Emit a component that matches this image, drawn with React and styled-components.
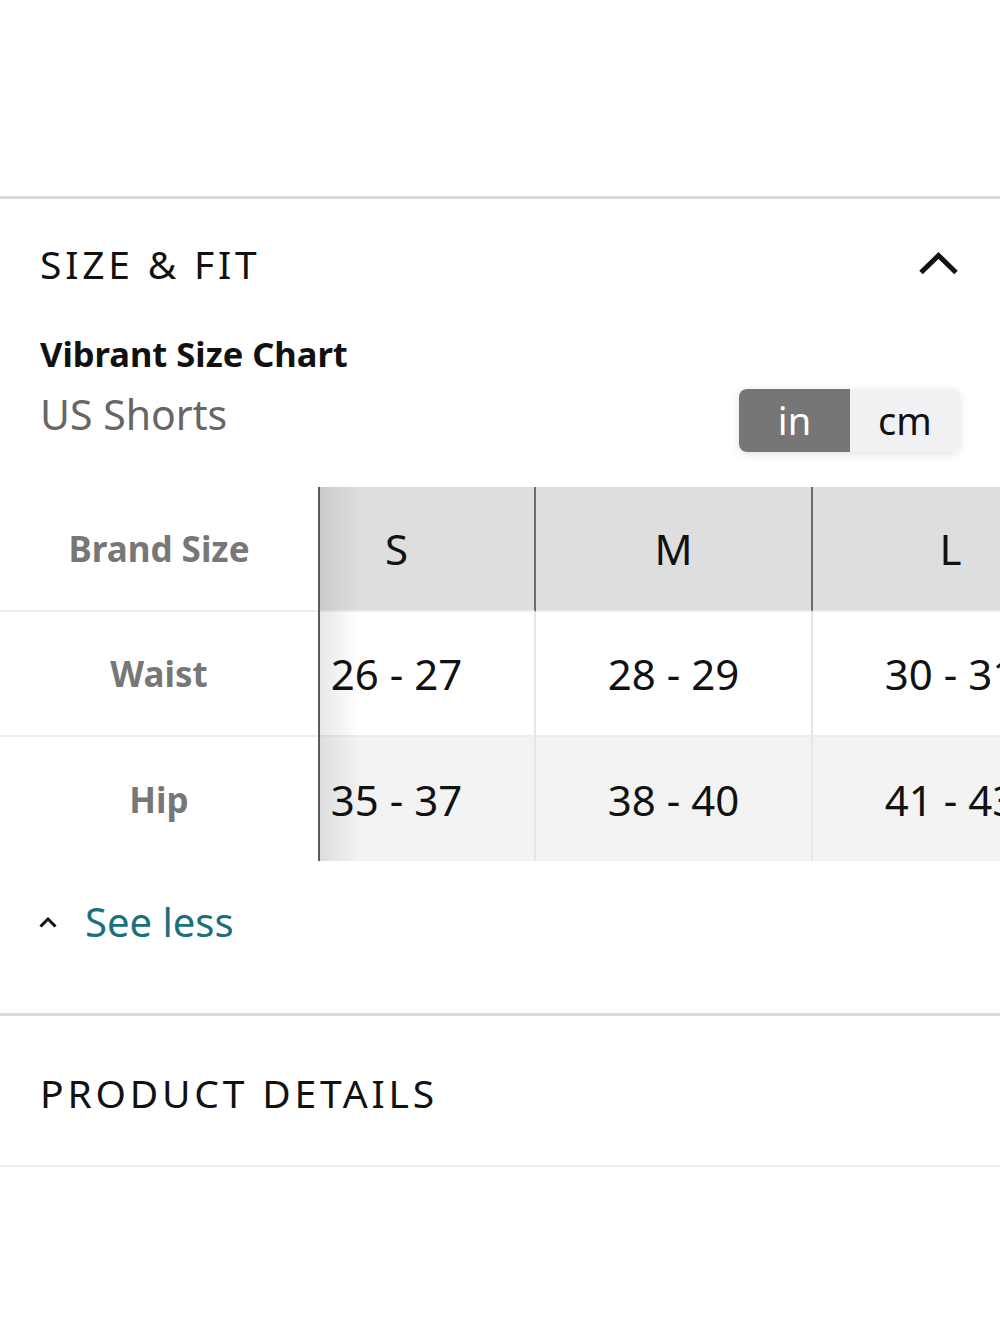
import React from "react";
import styled, { createGlobalStyle } from "styled-components";

const GlobalStyle = createGlobalStyle`
  html, body { margin: 0; padding: 0; background: #fff; }
  body {
    font-family: "Noto Sans", "Open Sans", "Liberation Sans", sans-serif;
    color: #111;
    overflow-x: hidden;
  }
  * { box-sizing: border-box; }
`;

const Page = styled.div`
  width: 1000px;
  padding-top: 196px;
  overflow: hidden;
`;

const Section = styled.section`
  border-top: 3px solid #dadada;
  padding-top: ${(p) => p.$top}px;
  padding-bottom: ${(p) => p.$bottom}px;
  border-bottom: ${(p) => (p.$bottomLine ? "2px solid #efefef" : "none")};
`;

const SectionHeader = styled.div`
  display: flex;
  align-items: center;
  justify-content: space-between;
  height: 47px;
  padding: 0 40px;
`;

const SectionTitle = styled.h2`
  margin: 0;
  font-size: 39px;
  line-height: 47px;
  font-weight: 400;
  letter-spacing: 3.8px;
  color: #111;
`;

const ChartTitle = styled.div`
  margin-top: 46px;
  padding: 0 40px;
  font-size: 34.5px;
  line-height: 42px;
  font-weight: 700;
  color: #111;
`;

const SubRow = styled.div`
  margin-top: 14px;
  padding: 0 40px;
  display: flex;
  justify-content: space-between;
  align-items: flex-start;
`;

const SubTitle = styled.div`
  font-size: 41px;
  line-height: 50px;
  color: #666;
`;

const Toggle = styled.div`
  display: flex;
  height: 63px;
  border-radius: 8px;
  overflow: hidden;
  box-shadow: 0 2px 8px rgba(0, 0, 0, 0.12);
`;

const ToggleOption = styled.div`
  flex: 0 0 ${(p) => p.$w}px;
  display: flex;
  align-items: center;
  justify-content: center;
  font-size: 38px;
  line-height: 63px;
  background: ${(p) => (p.$active ? "#767676" : "#f1f1f3")};
  color: ${(p) => (p.$active ? "#fff" : "#111")};
`;

const Table = styled.div`
  display: flex;
  margin-top: 35px;
`;

const LabelCol = styled.div`
  flex: 0 0 320px;
  border-right: 2px solid #5a5a5a;
  display: flex;
  flex-direction: column;
  position: relative;
  z-index: 2;
  background: #fff;
`;

const LabelCell = styled.div`
  height: ${(p) => (p.$last ? 124 : 125)}px;
  border-bottom: ${(p) => (p.$last ? "none" : "2px solid #ececec")};
  display: flex;
  align-items: center;
  justify-content: center;
  font-size: 35px;
  font-weight: 700;
  color: #777;
`;

const ScrollArea = styled.div`
  flex: 1;
  overflow: hidden;
  position: relative;

  &::before {
    content: "";
    position: absolute;
    left: 0;
    top: 0;
    bottom: 0;
    width: 40px;
    background: linear-gradient(to right, rgba(0, 0, 0, 0.09), rgba(0, 0, 0, 0));
    z-index: 1;
    pointer-events: none;
  }
`;

const Track = styled.div`
  display: grid;
  grid-template-columns: repeat(4, 277px);
  width: max-content;
  margin-left: -61px;
`;

const DataCell = styled.div`
  height: ${(p) => (p.$last ? 124 : 125)}px;
  border-bottom: ${(p) => (p.$last ? "none" : "2px solid #ececec")};
  border-right: 2px solid ${(p) => (p.$header ? "#6a6a6a" : "#e6e6e6")};
  background: ${(p) => (p.$header ? "#dedede" : p.$alt ? "#f3f3f3" : "#fff")};
  display: flex;
  align-items: center;
  justify-content: center;
  font-size: 42px;
  color: #111;
  white-space: nowrap;
`;

const SeeLess = styled.div`
  margin-top: 37px;
  padding-left: 38px;
  display: flex;
  align-items: center;
  gap: 27px;
  height: 48px;
`;

const SeeLessText = styled.span`
  font-size: 40px;
  line-height: 48px;
  color: #19707d;
`;

const ChevronUp = ({ w, h, d, sw }) => (
  <svg width={w} height={h} viewBox={`0 0 ${w} ${h}`} fill="none">
    <path d={d} stroke="#111" strokeWidth={sw} strokeLinejoin="miter" strokeLinecap="butt" />
  </svg>
);

const sizes = ["S", "M", "L", "XL"];
const rows = [
  { label: "Waist", values: ["26 - 27", "28 - 29", "30 - 31", "32 - 33"] },
  { label: "Hip", values: ["35 - 37", "38 - 40", "41 - 43", "44 - 46"] },
];

export default function App() {
  return (
    <>
      <GlobalStyle />
      <Page>
        <Section $top={41} $bottom={67}>
          <SectionHeader>
            <SectionTitle>SIZE &amp; FIT</SectionTitle>
            <ChevronUp w={42} h={28} d="M3 22.5 L20.5 5.5 L38 22.5" sw={5} />
          </SectionHeader>
          <ChartTitle>Vibrant Size Chart</ChartTitle>
          <SubRow>
            <SubTitle>US Shorts</SubTitle>
            <Toggle>
              <ToggleOption $w={111} $active>
                in
              </ToggleOption>
              <ToggleOption $w={110}>cm</ToggleOption>
            </Toggle>
          </SubRow>
          <Table>
            <LabelCol>
              <LabelCell>Brand Size</LabelCell>
              {rows.map((r, i) => (
                <LabelCell key={r.label} $last={i === rows.length - 1}>
                  {r.label}
                </LabelCell>
              ))}
            </LabelCol>
            <ScrollArea>
              <Track>
                {sizes.map((s) => (
                  <DataCell key={s} $header>
                    {s}
                  </DataCell>
                ))}
                {rows.map((r, i) =>
                  r.values.map((v, j) => (
                    <DataCell key={`${i}-${j}`} $alt={i === 1} $last={i === rows.length - 1}>
                      {v}
                    </DataCell>
                  ))
                )}
              </Track>
            </ScrollArea>
          </Table>
          <SeeLess>
            <ChevronUp w={20} h={14} d="M2.5 11.5 L10 4 L17.5 11.5" sw={3} />
            <SeeLessText>See less</SeeLessText>
          </SeeLess>
        </Section>
        <Section $top={53} $bottom={49} $bottomLine>
          <SectionHeader>
            <SectionTitle>PRODUCT DETAILS</SectionTitle>
          </SectionHeader>
        </Section>
      </Page>
    </>
  );
}
